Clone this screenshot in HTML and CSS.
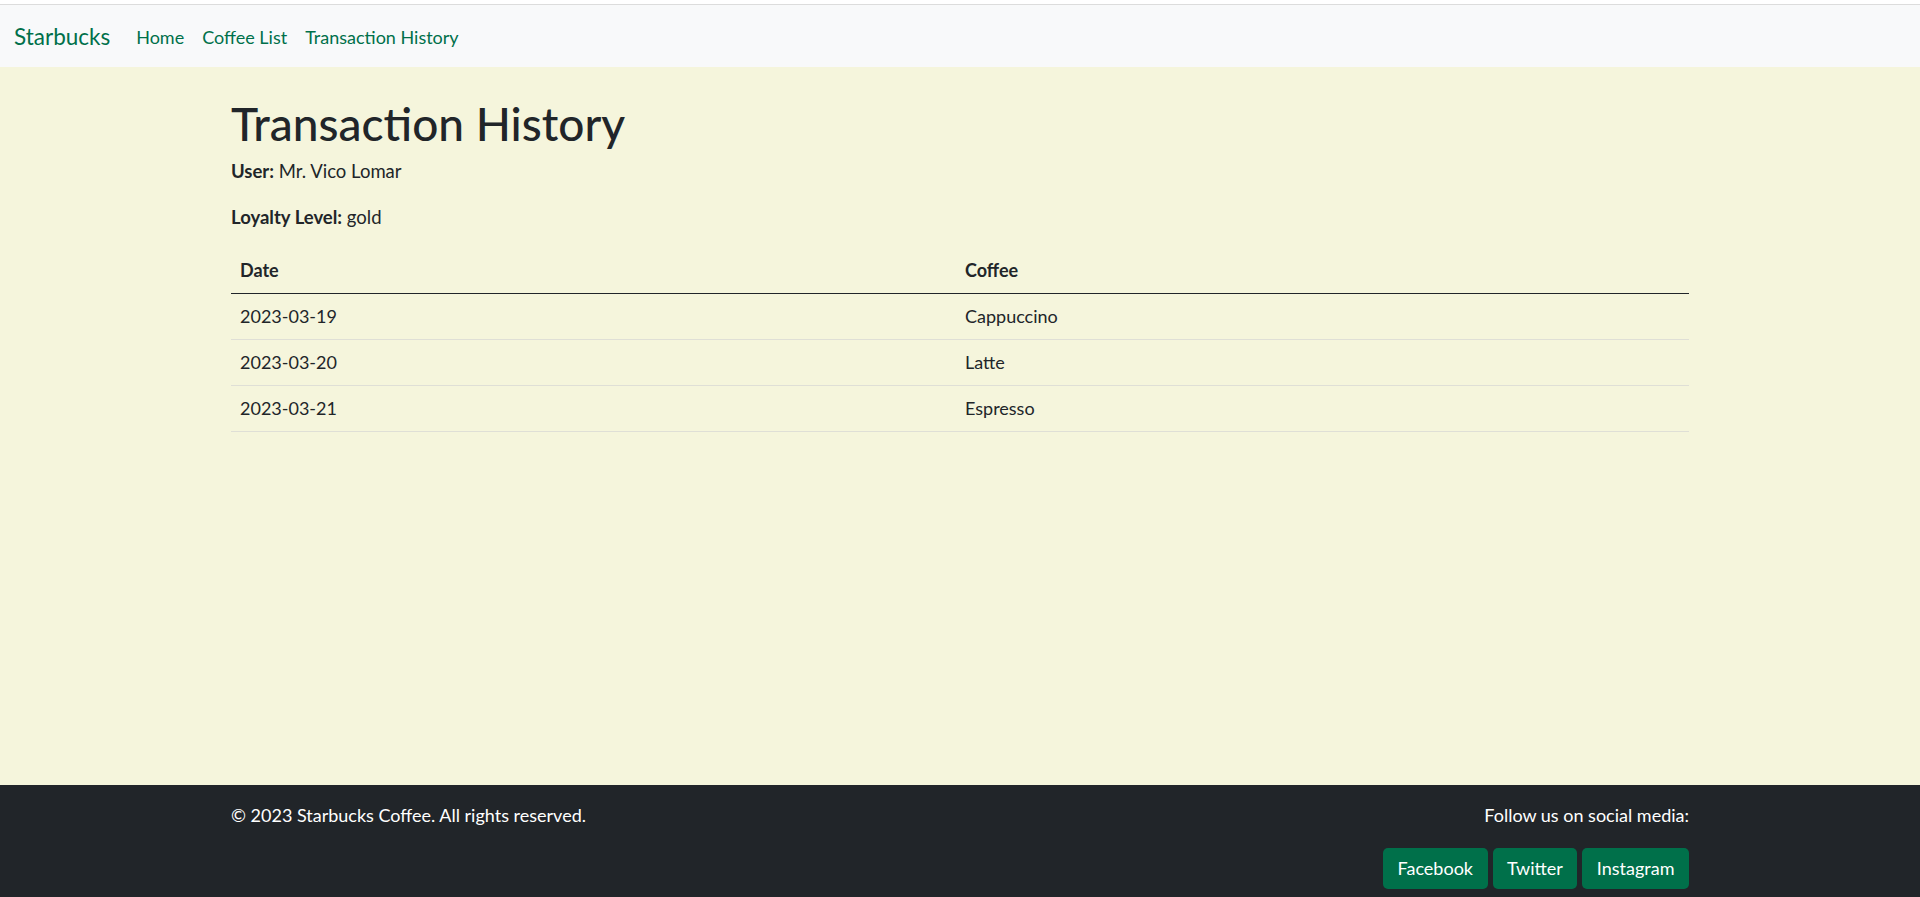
FILE: index.html
```html
<!DOCTYPE html>
<html lang="en">
<head>
<meta charset="utf-8">
<title>Transaction History</title>
<link rel="stylesheet" href="styles.css">
</head>
<body>
<div class="topline"></div>
<nav class="navbar">
  <a class="brand" href="#">Starbucks</a>
  <ul class="nav">
    <li><a href="#">Home</a></li>
    <li><a href="#">Coffee List</a></li>
    <li><a href="#">Transaction History</a></li>
  </ul>
</nav>
<main class="main">
  <div class="container">
    <h1 class="title">Transaction History</h1>
    <p class="info"><strong>User:</strong> Mr. Vico Lomar</p>
    <p class="info"><strong>Loyalty Level:</strong> gold</p>
    <table class="table">
      <thead>
        <tr><th class="col-date">Date</th><th>Coffee</th></tr>
      </thead>
      <tbody>
        <tr><td>2023-03-19</td><td>Cappuccino</td></tr>
        <tr><td>2023-03-20</td><td>Latte</td></tr>
        <tr><td>2023-03-21</td><td>Espresso</td></tr>
      </tbody>
    </table>
  </div>
</main>
<footer class="footer">
  <div class="container footer-row">
    <p class="copy">&copy; 2023 Starbucks Coffee. All rights reserved.</p>
    <div class="social">
      <p class="follow">Follow us on social media:</p>
      <div class="buttons">
        <a class="btn" href="#">Facebook</a>
        <a class="btn" href="#">Twitter</a>
        <a class="btn" href="#">Instagram</a>
      </div>
    </div>
  </div>
</footer>
</body>
</html>
```
FILE: styles.css
```css
* { box-sizing: border-box; }
html, body { margin: 0; padding: 0; }
body {
  font-family: Lato, "Noto Sans", sans-serif;
  font-size: 18px;
  line-height: 1.5;
  color: #212529;
  background: #f5f5dc;
  min-height: 100vh;
  display: flex;
  flex-direction: column;
}
a { text-decoration: none; }
.topline {
  height: 5px;
  background: #ffffff;
  border-bottom: 1px solid #dcdcdc;
}
.navbar {
  background: #f8f9fa;
  height: 62px;
  display: flex;
  align-items: center;
  padding: 0 14px;
}
.brand {
  font-size: 22.5px;
  color: #00704a;
  margin-right: 17px;
  line-height: 1.5;
  padding-top: 2px;
}
.nav {
  list-style: none;
  margin: 0;
  padding: 0;
  display: flex;
}
.nav a {
  display: block;
  color: #00704a;
  padding: 2px 9px 0;
}
.main { flex: 1; }
.container {
  width: 1458px;
  margin: 0 auto;
}
.title {
  font-size: 46px;
  font-weight: 500;
  line-height: 1.2;
  margin: 29px 0 7px;
}
.info {
  font-size: 18.5px;
  margin: 0 0 18px;
}
.info strong { font-weight: 700; }
.table {
  width: 100%;
  border-collapse: collapse;
  margin-top: -2px;
}
.table th, .table td {
  text-align: left;
  padding: 8px 9px;
  line-height: 29px;
  border-bottom: 1px solid #dfdfd6;
}
.table .col-date { width: 725px; }
.table th {
  font-weight: 700;
  border-bottom: 1px solid #212529;
}
.footer {
  background: #212529;
  color: #ffffff;
  height: 112px;
  padding-top: 17px;
  overflow: hidden;
}
.footer-row {
  display: flex;
  justify-content: space-between;
  align-items: flex-start;
}
.copy { margin: 0; }
.social { text-align: right; }
.follow { margin: 0 0 19px; }
.buttons {
  display: flex;
  gap: 5px;
  justify-content: flex-end;
}
.btn {
  display: inline-block;
  background: #00704a;
  color: #ffffff;
  height: 41px;
  line-height: 41px;
  padding: 0 14.5px;
  border-radius: 5px;
}
```
